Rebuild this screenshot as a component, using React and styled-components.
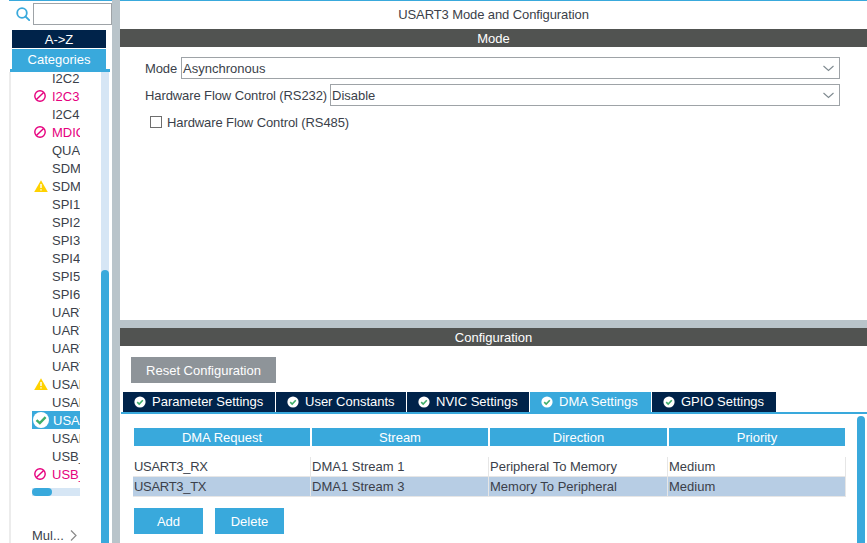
import styled, { createGlobalStyle } from 'styled-components';

const BLUE = '#39a9dc';
const NAVY = '#00234a';

const Global = createGlobalStyle`
    html, body {
        margin: 0;
        padding: 0;
        background: #fff;
    }
    * {
        box-sizing: border-box;
    }
    body {
        font-family: "Liberation Sans", Arial, sans-serif;
        font-size: 13px;
        color: #3b3f4a;
    }
`;

const Page = styled.div`
    display: flex;
    width: 867px;
    height: 543px;
    overflow: hidden;
`;

const Sidebar = styled.div`
    display: flex;
    flex-direction: column;
    width: 103px;
    margin-left: 9px;
    border-top: 1px solid ${BLUE};
    flex: none;
`;

const SearchRow = styled.div`
    display: flex;
    align-items: center;
    height: 26px;
    padding: 2px 0 2px 7px;
    gap: 3px;
`;

const SearchInput = styled.div`
    flex: 1;
    height: 22px;
    border: 1px solid #9ea3a7;
    background: #fff;
`;

const SortButton = styled.div`
    width: 94px;
    height: ${p => p.$h}px;
    line-height: ${p => p.$h + 1}px;
    margin: ${p => p.$top}px 0 0 3px;
    text-align: center;
    color: #fff;
    background: ${p => p.$active ? BLUE : NAVY};
`;

const SortLine = styled.div`
    height: 3px;
    margin: 0 2px 0 1px;
    background: ${BLUE};
    flex: none;
`;

const ListArea = styled.div`
    flex: 1;
    min-height: 0;
    display: flex;
    border-left: 2px solid #ececec;
`;

const ListColumn = styled.div`
    width: 90px;
    padding-left: 21px;
    overflow: hidden;
    display: flex;
    flex-direction: column;
    flex: none;
`;

const Rows = styled.div`
    margin-top: -3px;
    width: 48px;
`;

const Row = styled.div`
    position: relative;
    height: 18px;
    line-height: 19px;
    padding-left: ${p => p.$selected ? 21 : 20}px;
    white-space: nowrap;
    overflow: hidden;
    background: ${p => p.$selected ? BLUE : 'transparent'};
    color: ${p => p.$selected ? '#fff' : p.$pink ? '#e6007e' : '#3b3f4a'};
    svg {
        position: absolute;
        left: ${p => p.$selected ? 1 : 2}px;
        top: ${p => p.$selected ? 1 : 3}px;
    }
`;

const HScroll = styled.div`
    width: 48px;
    height: 8px;
    margin-top: 5px;
    flex: none;
    background: #d6e6f5;
`;

const HThumb = styled.div`
    width: 20px;
    height: 8px;
    border-radius: 4px;
    background: ${BLUE};
`;

const Group = styled.div`
    display: flex;
    align-items: center;
    justify-content: space-between;
    width: 45px;
    margin-top: 32px;
`;

const VTrack = styled.div`
    width: 8px;
    padding-top: 198px;
    display: flex;
    flex: none;
    background: #d6e6f5;
`;

const VThumb = styled.div`
    flex: 1;
    border-radius: 4px 4px 0 0;
    background: ${BLUE};
`;

const Splitter = styled.div`
    background: #b9c4ca;
    flex: none;
    ${p => p.$vertical ? 'width: 8px; height: 100%;' : 'height: 8px;'}
`;

const Main = styled.div`
    flex: 1;
    min-width: 0;
    display: flex;
    flex-direction: column;
`;

const TopPane = styled.div`
    height: 320px;
    flex: none;
    border-top: 1px solid ${BLUE};
`;

const Title = styled.div`
    height: 28px;
    line-height: 28px;
    text-align: center;
    letter-spacing: -0.1px;
`;

const Bar = styled.div`
    height: 18px;
    line-height: 19px;
    text-align: center;
    color: #fff;
    background: #515351;
`;

const Form = styled.div`
    display: flex;
    flex-direction: column;
    gap: 5px;
    padding: 10px 27px 0 25px;
`;

const FormRow = styled.div`
    display: flex;
    align-items: center;
    height: 22px;
    white-space: nowrap;
`;

const Label = styled.span`
    width: ${p => p.$w}px;
    flex: none;
    letter-spacing: -0.1px;
`;

const Select = styled.div`
    flex: 1;
    height: 22px;
    display: flex;
    align-items: center;
    justify-content: space-between;
    padding: 0 5px 0 1px;
    border: 1px solid #9ea3a7;
    background: #fff;
`;

const CheckRow = styled(FormRow)`
    gap: 5px;
    margin-left: 5px;
    letter-spacing: -0.1px;
`;

const CheckBox = styled.div`
    width: 12px;
    height: 12px;
    border: 1px solid #6e6e6e;
`;

const BottomPane = styled.div`
    flex: 1;
    min-height: 0;
    display: flex;
    flex-direction: column;
`;

const ActionButton = styled.div`
    width: ${p => p.$w}px;
    height: 26px;
    line-height: 27px;
    text-align: center;
    color: #fff;
    background: ${p => p.$gray ? '#8e9499' : BLUE};
`;

const ResetWrap = styled.div`
    padding: 11px 0 0 11px;
`;

const Tabs = styled.div`
    display: flex;
    gap: 1px;
    margin-top: 9px;
    padding-left: 3px;
`;

const Tab = styled.div`
    display: flex;
    align-items: center;
    gap: 6px;
    width: ${p => p.$w}px;
    height: 20px;
    padding: 0 0 1px 11px;
    color: #fff;
    white-space: nowrap;
    background: ${p => p.$active ? BLUE : NAVY};
`;

const TabLine = styled.div`
    height: 2px;
    margin-left: 1px;
    background: ${BLUE};
    flex: none;
`;

const TabBody = styled.div`
    flex: 1;
    min-height: 0;
    display: flex;
    justify-content: space-between;
    padding: 2px 2px 0 13px;
`;

const TableArea = styled.div`
    width: 713px;
    padding-top: 12px;
`;

const TableHead = styled.div`
    display: grid;
    grid-template-columns: 176px 176px 177px 176px;
    gap: 2px;
    margin-left: 1px;
`;

const HeadCell = styled.div`
    height: 18px;
    line-height: 19px;
    text-align: center;
    color: #fff;
    background: ${BLUE};
`;

const TableRow = styled.div`
    display: grid;
    grid-template-columns: 178px 178px 179px 178px;
    height: 20px;
    margin-top: ${p => p.$first ? 11 : 0}px;
    background: ${p => p.$selected ? '#b7cde4' : '#fff'};
    border-bottom: 1px solid #e6e6e6;
`;

const Cell = styled.div`
    line-height: 20px;
    padding-left: 1px;
    border-right: 1px solid #e6e6e6;
    white-space: nowrap;
    &:first-child {
        letter-spacing: -0.3px;
    }
`;

const TableButtons = styled.div`
    display: flex;
    gap: 12px;
    margin: 11px 0 0 1px;
`;

const BodyScroll = styled.div`
    width: 8px;
    border-radius: 4px 4px 0 0;
    background: ${BLUE};
`;

const SearchIcon = () => (
    <svg width="14" height="14" viewBox="0 0 14 14" fill="none" stroke={BLUE} strokeWidth="1.8" style={{ flex: 'none' }}>
        <circle cx="6" cy="6" r="4.8" />
        <path d="M9.5 9.5 13.2 13.2" strokeLinecap="round" />
    </svg>
);

const BanIcon = () => (
    <svg width="12" height="12" viewBox="0 0 12 12" fill="none" stroke="#e6007e" strokeWidth="1.4">
        <circle cx="6" cy="6" r="5.2" />
        <path d="M2.4 9.6 9.6 2.4" />
    </svg>
);

const WarnIcon = () => (
    <svg width="14" height="12" viewBox="0 0 14 12">
        <path d="M7 0.3 13.8 12H0.2z" fill="#ffd200" />
        <path d="M7 4v4M7 9.2v1.3" stroke="#fff" strokeWidth="1.4" />
    </svg>
);

const BigCheckIcon = () => (
    <svg width="16" height="16" viewBox="0 0 16 16">
        <circle cx="8" cy="8" r="8" fill="#fff" />
        <path d="M3.5 8.2 6.8 11.2 12.6 5.2" fill="none" stroke="#3fae6a" strokeWidth="2.4" />
    </svg>
);

const TabCheckIcon = () => (
    <svg width="12" height="12" viewBox="0 0 12 12" style={{ flex: 'none' }}>
        <circle cx="6" cy="6" r="5.6" fill="#fff" />
        <path d="M3.2 6.1 5.2 8 8.8 4.2" fill="none" stroke="#3fae6a" strokeWidth="1.6" />
    </svg>
);

const Chevron = () => (
    <svg width="7" height="11" viewBox="0 0 7 11" fill="none" stroke="#8a8a8a" strokeWidth="1.2">
        <path d="M1 0.5 6 5.5 1 10.5" />
    </svg>
);

const SelectArrow = () => (
    <svg width="11" height="7" viewBox="0 0 11 7" fill="none" stroke="#7f8a90" strokeWidth="1.1">
        <path d="M0.5 1 5.5 5.5 10.5 1" />
    </svg>
);

const peripherals = [
    { name: 'I2C2' },
    { name: 'I2C3', icon: 'ban' },
    { name: 'I2C4' },
    { name: 'MDIOS', icon: 'ban' },
    { name: 'QUADSPI' },
    { name: 'SDMMC1' },
    { name: 'SDMMC2', icon: 'warn' },
    { name: 'SPI1' },
    { name: 'SPI2' },
    { name: 'SPI3' },
    { name: 'SPI4' },
    { name: 'SPI5' },
    { name: 'SPI6' },
    { name: 'UART4' },
    { name: 'UART5' },
    { name: 'UART7' },
    { name: 'UART8' },
    { name: 'USART1', icon: 'warn' },
    { name: 'USART2' },
    { name: 'USART3', icon: 'ok' },
    { name: 'USART6' },
    { name: 'USB_OTG_FS' },
    { name: 'USB_OTG_HS', icon: 'ban' },
];

const tabs = [
    { label: 'Parameter Settings', w: 152 },
    { label: 'User Constants', w: 130 },
    { label: 'NVIC Settings', w: 122 },
    { label: 'DMA Settings', w: 121, active: true },
    { label: 'GPIO Settings', w: 124 },
];

const dmaRows = [
    ['USART3_RX', 'DMA1 Stream 1', 'Peripheral To Memory', 'Medium'],
    ['USART3_TX', 'DMA1 Stream 3', 'Memory To Peripheral', 'Medium'],
];

const App = () => {
    return (
        <Page>
            <Global />
            <Sidebar>
                <SearchRow>
                    <SearchIcon />
                    <SearchInput />
                </SearchRow>
                <SortButton $h={18} $top={3}>A-&gt;Z</SortButton>
                <SortButton $h={20} $top={1} $active>Categories</SortButton>
                <SortLine />
                <ListArea>
                    <ListColumn>
                        <Rows>
                            {peripherals.map(p => (
                                <Row key={p.name} $pink={p.icon === 'ban'} $selected={p.icon === 'ok'}>
                                    {p.icon === 'ban' && <BanIcon />}
                                    {p.icon === 'warn' && <WarnIcon />}
                                    {p.icon === 'ok' && <BigCheckIcon />}
                                    {p.name}
                                </Row>
                            ))}
                        </Rows>
                        <HScroll><HThumb /></HScroll>
                        <Group>Mul...<Chevron /></Group>
                    </ListColumn>
                    <VTrack><VThumb /></VTrack>
                </ListArea>
            </Sidebar>
            <Splitter $vertical />
            <Main>
                <TopPane>
                    <Title>USART3 Mode and Configuration</Title>
                    <Bar>Mode</Bar>
                    <Form>
                        <FormRow>
                            <Label $w={36}>Mode</Label>
                            <Select>Asynchronous<SelectArrow /></Select>
                        </FormRow>
                        <FormRow>
                            <Label $w={185}>Hardware Flow Control (RS232)</Label>
                            <Select>Disable<SelectArrow /></Select>
                        </FormRow>
                        <CheckRow>
                            <CheckBox />
                            Hardware Flow Control (RS485)
                        </CheckRow>
                    </Form>
                </TopPane>
                <Splitter />
                <BottomPane>
                    <Bar>Configuration</Bar>
                    <ResetWrap>
                        <ActionButton $gray $w={145}>Reset Configuration</ActionButton>
                    </ResetWrap>
                    <Tabs>
                        {tabs.map(t => (
                            <Tab key={t.label} $w={t.w} $active={t.active}>
                                <TabCheckIcon />
                                {t.label}
                            </Tab>
                        ))}
                    </Tabs>
                    <TabLine />
                    <TabBody>
                        <TableArea>
                            <TableHead>
                                <HeadCell>DMA Request</HeadCell>
                                <HeadCell>Stream</HeadCell>
                                <HeadCell>Direction</HeadCell>
                                <HeadCell>Priority</HeadCell>
                            </TableHead>
                            {dmaRows.map((r, i) => (
                                <TableRow key={r[0]} $first={i === 0} $selected={i === 1}>
                                    {r.map((c, j) => <Cell key={j}>{c}</Cell>)}
                                </TableRow>
                            ))}
                            <TableButtons>
                                <ActionButton $w={69}>Add</ActionButton>
                                <ActionButton $w={69}>Delete</ActionButton>
                            </TableButtons>
                        </TableArea>
                        <BodyScroll />
                    </TabBody>
                </BottomPane>
            </Main>
        </Page>
    );
};

export default App;
